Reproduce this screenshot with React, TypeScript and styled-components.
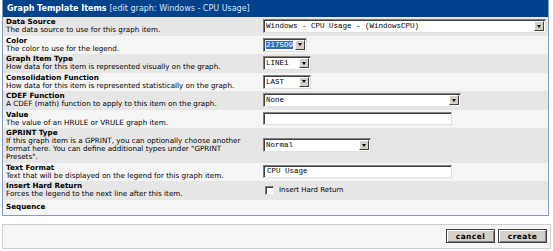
import styled, { createGlobalStyle } from "styled-components";

const GlobalStyle = createGlobalStyle`
  body {
    margin: 0;
    background: #ffffff;
    font-family: "DejaVu Sans", Verdana, sans-serif;
  }
`;

const Page = styled.div`
  width: 553px;
  padding: 0 2px;
  box-sizing: border-box;
`;

const Table = styled.div`
  width: 547px;
  border: 1px solid #7f9cc6;
  border-top: none;
  box-sizing: border-box;
`;

const Header = styled.div`
  display: flex;
  align-items: center;
  height: 17px;
  padding: 0 4px;
  background: #00438c;
  color: #ffffff;
  font-size: 8px;
  white-space: nowrap;
`;

const HeaderTitle = styled.span`
  font-weight: bold;
  margin-right: 3px;
`;

const HeaderSub = styled.span`
  color: #dce4f0;
`;

const Row = styled.div<{ $alt?: boolean; $min?: number }>`
  display: flex;
  align-items: center;
  min-height: ${(p) => p.$min ?? 18.5}px;
  background: ${(p) => (p.$alt ? "#f5f5f5" : "#e6e6e6")};
`;

const Label = styled.div`
  width: 260px;
  flex-shrink: 0;
  box-sizing: border-box;
  padding: 1.25px 3px;
  font-size: 7.2px;
  line-height: 8px;
  color: #000;
`;

const Title = styled.div`
  font-weight: bold;
`;

const Desc = styled.div`
  white-space: nowrap;
`;

const Control = styled.div`
  flex: 1;
  display: flex;
  align-items: center;
`;

const Dropdown = styled.div<{ $width: number }>`
  display: flex;
  align-items: center;
  width: ${(p) => p.$width}px;
  height: 14px;
  box-sizing: border-box;
  background: #ffffff;
  border: 1px solid;
  border-color: #808080 #e0e0e0 #e0e0e0 #808080;
  box-shadow: inset 1px 1px #404040;
  padding: 0 1px 0 2px;
`;

const DropText = styled.span<{ $selected?: boolean }>`
  flex: 1;
  font-family: "Liberation Mono", "DejaVu Sans Mono", monospace;
  font-size: 7.5px;
  line-height: 10px;
  color: ${(p) => (p.$selected ? "#ffffff" : "#000000")};
  white-space: nowrap;
  overflow: hidden;
  span {
    background: ${(p) => (p.$selected ? "#316ac5" : "transparent")};
  }
`;

const Arrow = styled.div`
  width: 10px;
  height: 10px;
  flex-shrink: 0;
  box-sizing: border-box;
  background: #d4d0c8;
  border: 1px solid;
  border-color: #ffffff #404040 #404040 #ffffff;
  display: flex;
  align-items: center;
  justify-content: center;
  &::after {
    content: "";
    border-left: 2.5px solid transparent;
    border-right: 2.5px solid transparent;
    border-top: 3px solid #000;
  }
`;

const TextInput = styled.div<{ $width: number }>`
  width: ${(p) => p.$width}px;
  height: 13px;
  box-sizing: border-box;
  background: #ffffff;
  border: 1px solid;
  border-color: #808080 #e0e0e0 #e0e0e0 #808080;
  box-shadow: inset 1px 1px #404040;
  padding: 0 3px;
  font-family: "Liberation Mono", "DejaVu Sans Mono", monospace;
  font-size: 7.5px;
  line-height: 11px;
  white-space: nowrap;
`;

const CheckLabel = styled.label`
  display: flex;
  align-items: center;
  gap: 5px;
  margin-left: 2px;
  font-size: 7px;
  color: #000;
`;

const CheckBox = styled.span`
  width: 9px;
  height: 9px;
  box-sizing: border-box;
  background: #ffffff;
  border: 1px solid;
  border-color: #808080 #f0f0f0 #f0f0f0 #808080;
  box-shadow: inset 1px 1px #404040;
`;

const ButtonBar = styled.div`
  display: flex;
  justify-content: flex-end;
  align-items: center;
  gap: 3px;
  width: 549px;
  height: 25px;
  margin-top: 8px;
  box-sizing: border-box;
  padding: 0 3px;
  background: #f5f5f5;
  border: 1px solid #cccccc;
`;

const Button = styled.button`
  width: 49px;
  height: 14px;
  padding: 0;
  background: #d4d0c8;
  border: 1px solid #404040;
  box-shadow: inset 1px 1px #ffffff, inset -1px -1px #808080;
  font-family: "DejaVu Sans", Verdana, sans-serif;
  font-weight: bold;
  font-size: 7.5px;
  letter-spacing: 0.4px;
  color: #000;
`;

type Field = {
  title: string;
  desc?: string[];
  alt: boolean;
  min?: number;
  control?: JSX.Element;
};

const Select = ({ width, value, selected }: { width: number; value: string; selected?: boolean }) => (
  <Dropdown $width={width}>
    <DropText $selected={selected}>
      <span>{value}</span>
    </DropText>
    <Arrow />
  </Dropdown>
);

const fields: Field[] = [
  {
    title: "Data Source",
    desc: ["The data source to use for this graph item."],
    alt: false,
    control: <Select width={283} value="Windows - CPU Usage - (WindowsCPU)" />,
  },
  {
    title: "Color",
    desc: ["The color to use for the legend."],
    alt: true,
    control: <Select width={44} value="2175D9" selected />,
  },
  {
    title: "Graph Item Type",
    desc: ["How data for this item is represented visually on the graph."],
    alt: false,
    control: <Select width={48} value="LINE1" />,
  },
  {
    title: "Consolidation Function",
    desc: ["How data for this item is represented statistically on the graph."],
    alt: true,
    control: <Select width={48} value="LAST" />,
  },
  {
    title: "CDEF Function",
    desc: ["A CDEF (math) function to apply to this item on the graph."],
    alt: false,
    control: <Select width={198} value="None" />,
  },
  {
    title: "Value",
    desc: ["The value of an HRULE or VRULE graph item."],
    alt: true,
    control: <TextInput $width={189} />,
  },
  {
    title: "GPRINT Type",
    desc: [
      "If this graph item is a GPRINT, you can optionally choose another",
      'format here. You can define additional types under "GPRINT',
      'Presets".',
    ],
    alt: false,
    control: <Select width={108} value="Normal" />,
  },
  {
    title: "Text Format",
    desc: ["Text that will be displayed on the legend for this graph item."],
    alt: true,
    control: <TextInput $width={189}>CPU Usage</TextInput>,
  },
  {
    title: "Insert Hard Return",
    desc: ["Forces the legend to the next line after this item."],
    alt: false,
    control: (
      <CheckLabel>
        <CheckBox />
        Insert Hard Return
      </CheckLabel>
    ),
  },
  { title: "Sequence", alt: true, min: 15 },
];

export default function App() {
  return (
    <Page>
      <GlobalStyle />
      <Table>
        <Header>
          <HeaderTitle>Graph Template Items</HeaderTitle>
          <HeaderSub>[edit graph: Windows - CPU Usage]</HeaderSub>
        </Header>
        {fields.map((f) => (
          <Row key={f.title} $alt={f.alt} $min={f.min}>
            <Label>
              <Title>{f.title}</Title>
              {f.desc?.map((line) => (
                <Desc key={line}>{line}</Desc>
              ))}
            </Label>
            <Control>{f.control}</Control>
          </Row>
        ))}
      </Table>
      <ButtonBar>
        <Button>cancel</Button>
        <Button>create</Button>
      </ButtonBar>
    </Page>
  );
}
